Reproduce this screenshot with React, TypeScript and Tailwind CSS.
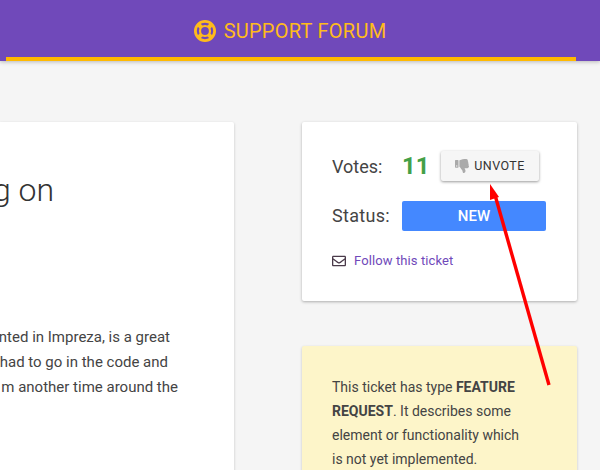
import React from 'react';
import { FaThumbsDown, FaRegEnvelope } from 'react-icons/fa';

const App = () => {
  return (
    <div className="relative h-[470px] w-[600px] overflow-hidden bg-[#f5f5f5] font-['Roboto',sans-serif] text-[#444]">
      {/* Header */}
      <header className="h-[61px] bg-[#7049ba] shadow-[0_1px_4px_rgba(0,0,0,0.25)]">
        <div className="ml-[6px] flex h-full w-[570px] items-center justify-center gap-[8px] border-b-4 border-[#ffb900] pt-[5px] pr-[2px] text-[#ffbb1c]">
          <svg className="h-[22px] w-[22px]" viewBox="0 0 22 22" fill="none" stroke="currentColor">
            <circle cx="11" cy="11" r="9.6" strokeWidth="2.8" />
            <circle cx="11" cy="11" r="5" strokeWidth="2.2" />
            <path d="M4.5 4.5L7.5 7.5M17.5 4.5L14.5 7.5M4.5 17.5L7.5 14.5M17.5 17.5L14.5 14.5" strokeWidth="4" />
          </svg>
          <span className="text-[20px] leading-none tracking-[0.25px]">SUPPORT FORUM</span>
        </div>
      </header>

      <div className="mt-[61px] flex gap-[68px]">
        {/* Ticket body, cut by the left edge of the window */}
        <div className="flex h-[400px] w-[234px] flex-col items-end overflow-hidden whitespace-nowrap rounded-r-[2px] bg-white shadow-[0_1px_3px_rgba(0,0,0,0.2)]">
          <h1 className="mt-[48px] mr-[180px] text-[32px] leading-[40px] font-light text-[#333]">g on</h1>
          <div className="mt-[115px] flex flex-col items-end text-[15px] leading-[25px]">
            <p className="mr-[64px]">nted in Impreza, is a great</p>
            <p className="mr-[66px]">had to go in the code and</p>
            <p className="mr-[56px]">m another time around the</p>
          </div>
        </div>

        {/* Sidebar */}
        <div className="flex w-[275px] flex-col gap-[45px]">
          <div className="h-[179px] rounded-[2px] bg-white pt-[29px] pl-[30px] shadow-[0_1px_3px_rgba(0,0,0,0.3)]">
            <div className="flex h-[30px] items-center">
              <span className="w-[70px] text-[18px]">Votes:</span>
              <span className="w-[39px] text-[24px] font-bold text-[#43a047]">11</span>
              <button className="flex h-[30px] w-[98px] items-center justify-center gap-[5px] rounded-[2px] bg-[#f6f6f6] text-[12.5px] tracking-[0.4px] text-[#333] shadow-[0_1px_3px_rgba(0,0,0,0.4)]">
                <FaThumbsDown className="h-[14px] w-[14px] text-[#aaa]" />
                UNVOTE
              </button>
            </div>
            <div className="mt-[20px] flex h-[30px] items-center">
              <span className="w-[70px] pb-[1px] text-[18px] tracking-[0.3px]">Status:</span>
              <div className="flex h-[30px] w-[144px] items-center justify-center rounded-[2px] bg-[#4488ff] text-[15px] font-medium text-white">
                NEW
              </div>
            </div>
            <div className="mt-[20px] flex items-center gap-[8px] text-[13px] leading-[20px] tracking-[0.1px]">
              <FaRegEnvelope className="h-[14px] w-[14px] text-[#4a3a4a]" />
              <span className="text-[#7049ba]">Follow this ticket</span>
            </div>
          </div>

          <div className="h-[200px] rounded-[2px] bg-[#fdf5c9] pt-[29px] pl-[30px] pr-[50px] text-[14px] leading-[24px] shadow-[0_1px_3px_rgba(0,0,0,0.2)]">
            This ticket has type <b>FEATURE REQUEST</b>. It describes some element or functionality which is not yet implemented.
          </div>
        </div>
      </div>

      {/* Red annotation arrow drawn over the screenshot */}
      <svg className="absolute top-0 left-0" width="600" height="470" viewBox="0 0 600 470">
        <line x1="549" y1="385" x2="495" y2="195" stroke="#ff0000" strokeWidth="3.4" />
        <polygon points="490,184 490,200 499,197" fill="#ff0000" />
      </svg>
    </div>
  );
};

export default App;
